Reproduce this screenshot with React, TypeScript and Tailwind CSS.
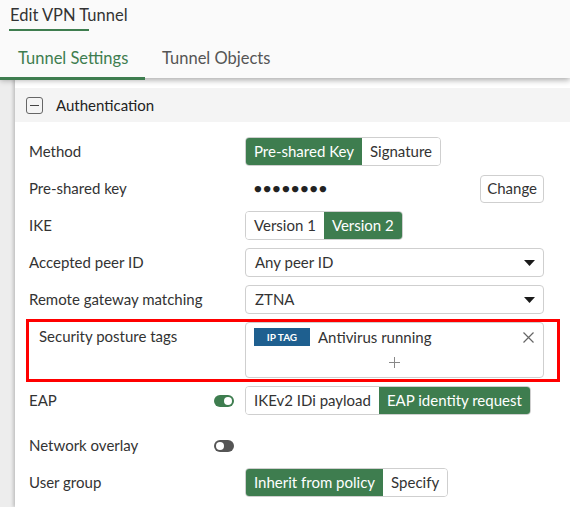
import React, { useState } from "react";

const GREEN = "bg-[#3e7d4f]";

interface SegmentProps {
  options: string[];
  active: number;
}

function Segmented({ options, active }: SegmentProps) {
  return (
    <div className="flex h-[29px] overflow-hidden rounded-[4px] border border-[#cfcfcf]">
      {options.map((o, i) => (
        <div
          key={o}
          className={`flex items-center px-[8px] ${
            i === active ? `${GREEN} text-white` : "bg-white text-[#333]"
          }`}
        >
          {o}
        </div>
      ))}
    </div>
  );
}

function Select({ value }: { value: string }) {
  return (
    <div className="flex h-[29px] w-[299px] items-center justify-between rounded-[4px] border border-[#cfcfcf] bg-white pl-[9px] pr-[8px] text-[#333]">
      <span>{value}</span>
      <svg width="11" height="6" viewBox="0 0 11 6">
        <path d="M0 0h11L5.5 6z" fill="#1a1a1a" />
      </svg>
    </div>
  );
}

function Toggle({ on }: { on: boolean }) {
  return (
    <div
      className={`flex h-[12px] w-[20px] items-center rounded-full px-[2px] ${
        on ? "justify-end bg-[#3e7d4f]" : "justify-start bg-[#555]"
      }`}
    >
      <div className="h-[8px] w-[8px] rounded-full bg-white" />
    </div>
  );
}

function Row({
  label,
  toggle,
  children,
}: {
  label: string;
  toggle?: React.ReactNode;
  children?: React.ReactNode;
}) {
  return (
    <div className="flex h-[37px] items-center pl-[14px]">
      <div className="flex w-[216px] items-center justify-between pr-[11px] text-[#333]">
        <span>{label}</span>
        {toggle}
      </div>
      {children}
    </div>
  );
}

export default function App() {
  const [tab] = useState("settings");

  return (
    <div
      className="flex h-[507px] w-[570px] flex-col overflow-hidden bg-white text-[15px]"
      style={{ fontFamily: "Lato, 'Open Sans', sans-serif" }}
    >
      {/* title + tabs */}
      <div className="relative z-10 h-[78px] shrink-0 bg-[#fafafa] shadow-[0_2px_6px_rgba(0,0,0,0.35)]">
        <div className="pl-[10px] pt-[5px] text-[16.5px] leading-[20px] text-[#333]">
          Edit VPN Tunnel
        </div>
        <div className="ml-[9px] mt-[4px] h-[2px] w-[80px] bg-[#3e7d4f]" />
        <div className="mt-[15px] flex text-[16.5px]">
          <div
            className={`w-[145px] border-b-[3px] pb-[6px] pl-[18px] ${
              tab === "settings"
                ? "border-[#3e7d4f] text-[#3e7d4f]"
                : "border-transparent text-[#555]"
            }`}
          >
            Tunnel Settings
          </div>
          <div className="pl-[17px] text-[#555]">Tunnel Objects</div>
        </div>
      </div>

      <div className="flex flex-1">
        <div className="w-[15px] shrink-0 bg-[#ededed]" />
        <div className="flex-1 bg-white shadow-[-2px_0_3px_rgba(0,0,0,0.18)]">
          {/* section header */}
          <div className="mt-[10px] flex h-[34px] items-center bg-[#f4f4f4] pl-[11px] text-[#222]">
            <div className="flex h-[17px] w-[17px] items-center justify-center rounded-[3px] border border-[#666]">
              <div className="h-px w-[9px] bg-[#444]" />
            </div>
            <span className="ml-[13px]">Authentication</span>
          </div>

          <div className="mt-[11px]">
            <Row label="Method">
              <Segmented options={["Pre-shared Key", "Signature"]} active={0} />
            </Row>
            <Row label="Pre-shared key">
              <div className="flex w-[299px] items-center justify-between">
                <span className="pl-[9px] text-[13px] tracking-[1.5px] text-[#222]">
                  ●●●●●●●●
                </span>
                <div className="flex h-[28px] items-center rounded-[4px] border border-[#cfcfcf] bg-white px-[6px] text-[#333]">
                  Change
                </div>
              </div>
            </Row>
            <Row label="IKE">
              <Segmented options={["Version 1", "Version 2"]} active={1} />
            </Row>
            <Row label="Accepted peer ID">
              <Select value="Any peer ID" />
            </Row>
            <Row label="Remote gateway matching">
              <Select value="ZTNA" />
            </Row>

            {/* posture tags */}
            <div className="ml-[11px] mt-px flex h-[63px] w-[534px] border-[3px] border-[#ff0000]">
              <div className="w-[216px] pl-[10px] pt-[3px] text-[#333]">
                Security posture tags
              </div>
              <div className="flex h-[56px] w-[299px] flex-col rounded-[4px] border border-[#cfcfcf] bg-white">
                <div className="flex items-center pl-[8px] pr-[9px] pt-[3px]">
                  <span className="flex h-[18px] w-[56px] items-center justify-center bg-[#1e5f8f] text-[10px] font-bold text-white">
                    IP TAG
                  </span>
                  <span className="ml-[8px] flex-1 text-[#333]">Antivirus running</span>
                  <svg width="11" height="11" viewBox="0 0 11 11">
                    <path d="M0.5 0.5l10 10M10.5 0.5l-10 10" stroke="#666" strokeWidth="1.2" />
                  </svg>
                </div>
                <div className="flex flex-1 items-center justify-center">
                  <svg width="11" height="11" viewBox="0 0 11 11">
                    <path d="M5.5 0v11M0 5.5h11" stroke="#888" strokeWidth="1" />
                  </svg>
                </div>
              </div>
            </div>

            <Row label="EAP" toggle={<Toggle on />}>
              <Segmented options={["IKEv2 IDi payload", "EAP identity request"]} active={1} />
            </Row>
            <div className="mt-[8px]">
              <Row label="Network overlay" toggle={<Toggle on={false} />} />
            </div>
            <Row label="User group">
              <Segmented options={["Inherit from policy", "Specify"]} active={0} />
            </Row>
          </div>
        </div>
      </div>
    </div>
  );
}
